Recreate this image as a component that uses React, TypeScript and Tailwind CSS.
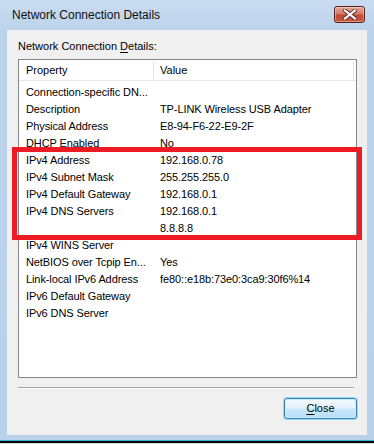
import React from "react";

const rows: [string, string][] = [
  ["Connection-specific DN...", ""],
  ["Description", "TP-LINK Wireless USB Adapter"],
  ["Physical Address", "E8-94-F6-22-E9-2F"],
  ["DHCP Enabled", "No"],
  ["IPv4 Address", "192.168.0.78"],
  ["IPv4 Subnet Mask", "255.255.255.0"],
  ["IPv4 Default Gateway", "192.168.0.1"],
  ["IPv4 DNS Servers", "192.168.0.1"],
  ["", "8.8.8.8"],
  ["IPv4 WINS Server", ""],
  ["NetBIOS over Tcpip En...", "Yes"],
  ["Link-local IPv6 Address", "fe80::e18b:73e0:3ca9:30f6%14"],
  ["IPv6 Default Gateway", ""],
  ["IPv6 DNS Server", ""],
];

export default function App() {
  return (
    <div
      className="relative w-[374px] h-[444px] flex flex-col bg-[linear-gradient(180deg,#c9dcf1_0px,#bcd3ec_30px,#b9d1ea_100%)] text-black overflow-hidden"
      style={{ fontFamily: '"Liberation Sans", Arial, sans-serif' }}
    >
      {/* title bar */}
      <div className="h-[30px] flex items-center justify-between pl-[12px] pr-[9px] shrink-0">
        <span className="text-[12px] text-[#101010]">Network Connection Details</span>
        <div className="w-[31px] h-[17px] mt-[-2px] rounded-[3px] border border-[#5c2222] bg-[linear-gradient(180deg,#e8a99c_0%,#d27a66_45%,#c04a33_55%,#c95a40_100%)] flex items-center justify-center shadow-[inset_0_0_0_1px_rgba(255,255,255,0.35)]">
          <svg width="14" height="11" viewBox="0 0 14 11">
            <path d="M2 1.5 L12 9.5 M12 1.5 L2 9.5" stroke="#5a2a2a" strokeWidth="4" strokeLinecap="square" />
            <path d="M2 1.5 L12 9.5 M12 1.5 L2 9.5" stroke="#ffffff" strokeWidth="2.2" strokeLinecap="square" />
          </svg>
        </div>
      </div>

      {/* client area */}
      <div className="flex-1 flex px-[7px] min-h-0">
        <div className="flex-1 bg-[#f0f0f0] flex flex-col pl-[11px] pr-[10px] pt-[10px]">
          <div className="text-[11px] leading-[13px] h-[13px]">
            Network Connection <span className="underline underline-offset-2">D</span>etails:
          </div>
          <div className="mt-[6px] h-[319px] border border-[#828790] bg-white flex flex-col">
            <div className="flex h-[21px] border-b border-[#e5e5e5] text-[11px] items-center shrink-0 pt-[1px]">
              <div className="w-[135px] pl-[7px] h-full flex items-center border-r border-[#e5e5e5]">Property</div>
              <div className="w-[200px] pl-[6px] h-full flex items-center border-r border-[#e5e5e5]">Value</div>
            </div>
            <div className="pt-[3px] flex flex-col">
              {rows.map(([p, v], i) => (
                <div key={i} className="flex h-[17px] items-center text-[11px] whitespace-nowrap tracking-[-0.1px]">
                  <div className="w-[135px] pl-[7px]">{p}</div>
                  <div className="pl-[6px]">{v}</div>
                </div>
              ))}
            </div>
          </div>
          <div className="mt-[9px] mr-[3px] h-[2px] border-t border-[#a0a0a0] border-b border-b-white" />
          <div className="flex justify-end mt-[9px]">
            <button className="w-[73px] h-[21px] rounded-[3px] border border-[#3c7fb1] shadow-[0_0_0_1px_#8fdcf7,inset_0_0_0_1px_#c6f0fd] bg-[linear-gradient(180deg,#f2f9fe_0%,#e3f3fd_45%,#c8e7fa_55%,#b8dff7_100%)] text-[11px] leading-none flex items-center justify-center">
              <span><span className="underline underline-offset-2">C</span>lose</span>
            </button>
          </div>
        </div>
      </div>

      {/* bottom frame */}
      <div className="h-[5px] shrink-0" />
      <div className="h-[1px] bg-[#3bb5d8] shrink-0" />
      <div className="h-[2px] bg-black shrink-0" />
      <div className="h-[1px] bg-[#d8d8d8] shrink-0" />

      {/* red annotation box */}
      <div className="absolute left-[12px] top-[147px] w-[350px] h-[93px] border-[5px] border-[#ed1c24]" />
    </div>
  );
}
